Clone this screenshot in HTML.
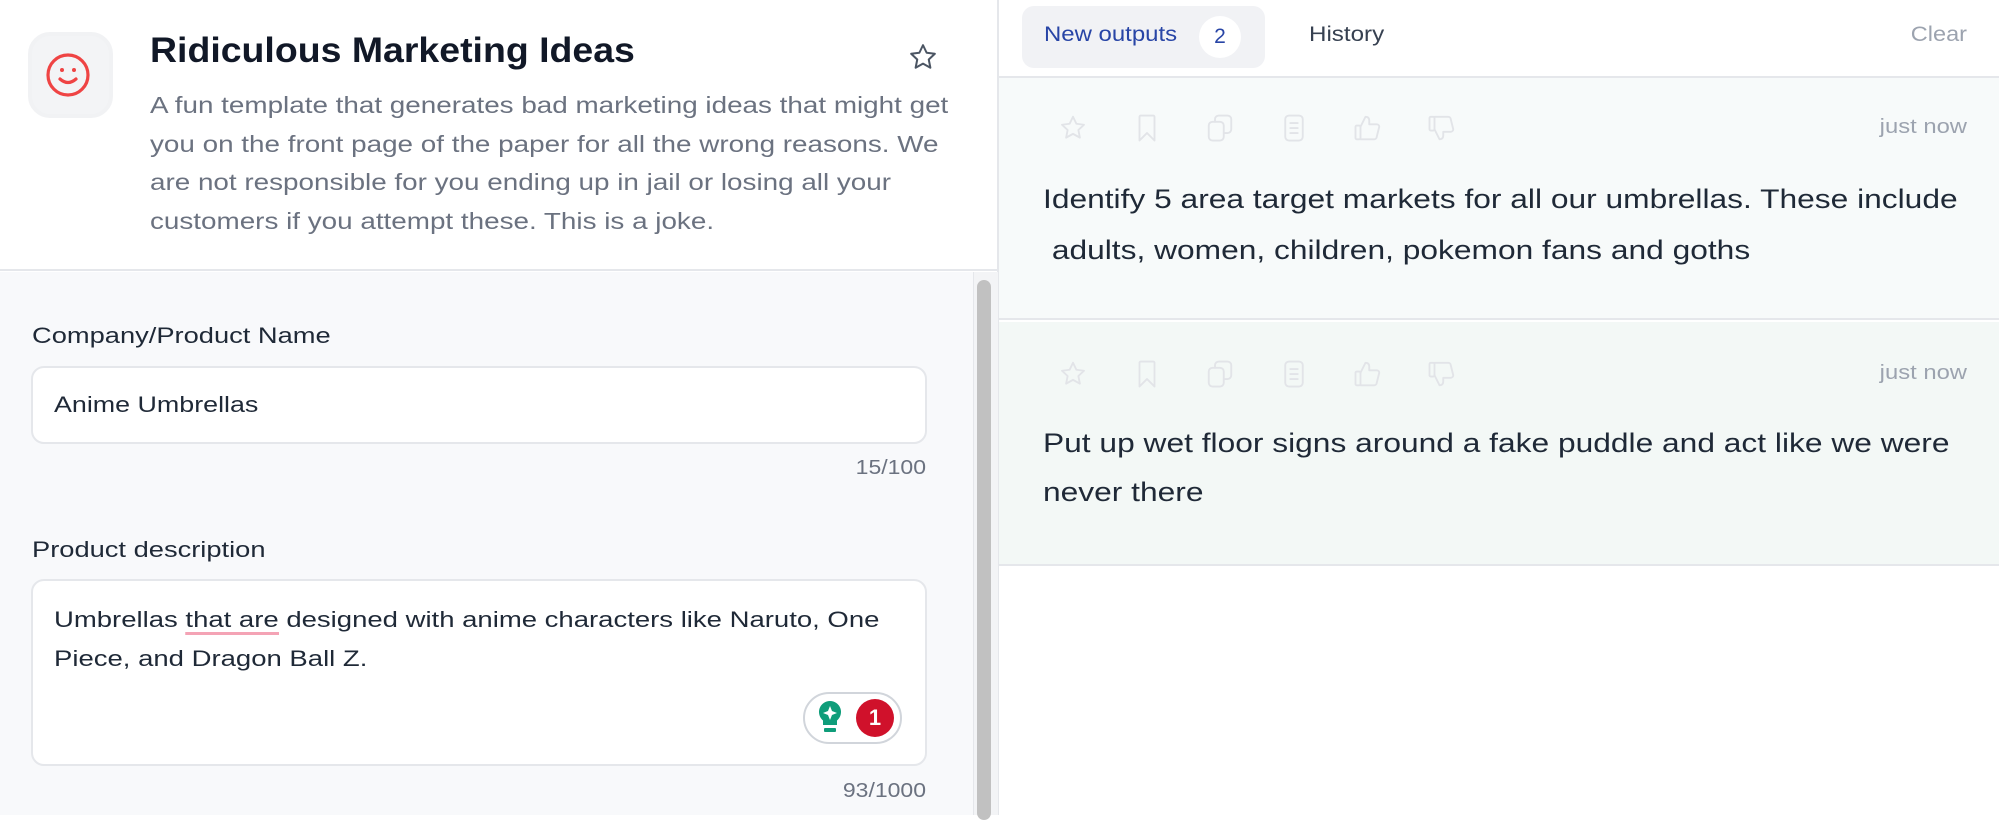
<!DOCTYPE html>
<html><head><meta charset="utf-8"><style>
*{box-sizing:border-box;margin:0;padding:0}
body{width:1999px;height:815px;overflow:hidden;background:#fff;font-family:"Liberation Sans",Arial,sans-serif;position:relative}
.abs{position:absolute;white-space:nowrap}
.sx{transform-origin:0 0}
.sr{transform-origin:100% 0}
.ic{position:absolute;top:0}
</style></head><body>
<div class="abs" style="left:0;top:0;width:998px;height:271px;background:#fff;border-bottom:2px solid #e5e7eb"></div>
<div class="abs" style="left:0;top:272px;width:998px;height:543px;background:#f8f9fb"></div>
<div class="abs" style="left:997px;top:0;width:2px;height:815px;background:#e5e7eb"></div>
<div class="abs" style="left:973px;top:272px;width:25px;height:543px;background:#f3f4f6;border-left:1px solid #e5e7eb"></div>
<div class="abs" style="left:977px;top:280px;width:14px;height:540px;background:#c1c1c1;border-radius:7px"></div>
<div class="abs" style="left:28px;top:32px;width:85px;height:86px;border:4px solid #f1f2f4;border-radius:22px;background:#f3f4f6"></div>
<svg class="abs" style="left:44px;top:51px" width="48" height="48" viewBox="0 0 48 48"><circle cx="24" cy="24" r="20" fill="none" stroke="#ef4444" stroke-width="3.2"/><circle cx="18" cy="19" r="2" fill="#ef4444"/><circle cx="30" cy="19" r="2" fill="#ef4444"/><path d="M16 28 Q24 35 32 28" fill="none" stroke="#ef4444" stroke-width="3.2" stroke-linecap="round"/></svg>
<div class="abs sx" style="left:150px;top:31px;font-size:35px;font-weight:700;color:#111827;transform:scaleX(1.07)">Ridiculous Marketing Ideas</div>
<svg class="abs" style="left:908px;top:42px" width="30" height="30" viewBox="0 0 24 24"><path d="M12 2.5l2.9 6.1 6.6.8-4.9 4.6 1.3 6.6L12 17.3l-5.9 3.3 1.3-6.6-4.9-4.6 6.6-.8z" fill="none" stroke="#4b5563" stroke-width="1.6" stroke-linejoin="round"/></svg>
<div class="abs sx" style="left:150px;top:86px;font-size:23px;line-height:38.5px;color:#6b7280;transform:scaleX(1.21)">A fun template that generates bad marketing ideas that might get<br>you on the front page of the paper for all the wrong reasons. We<br>are not responsible for you ending up in jail or losing all your<br>customers if you attempt these. This is a joke.</div>
<div class="abs sx" style="left:32px;top:323px;font-size:22px;color:#1f2937;transform:scaleX(1.24)">Company/Product Name</div>
<div class="abs" style="left:31px;top:366px;width:896px;height:78px;background:#fff;border:2px solid #e5e7eb;border-radius:13px"></div>
<div class="abs sx" style="left:54px;top:392px;font-size:22px;color:#1f2937;transform:scaleX(1.22)">Anime Umbrellas</div>
<div class="abs sr" style="left:826px;top:457px;width:100px;text-align:right;font-size:20px;color:#6b7280;transform:scaleX(1.15)">15/100</div>
<div class="abs sx" style="left:32px;top:537px;font-size:22px;color:#1f2937;transform:scaleX(1.24)">Product description</div>
<div class="abs" style="left:31px;top:579px;width:896px;height:187px;background:#fff;border:2px solid #e5e7eb;border-radius:13px"></div>
<div class="abs sx" style="left:54px;top:600px;font-size:22px;line-height:39px;color:#1f2937;transform:scaleX(1.25)">Umbrellas <span style="border-bottom:3px solid #f4a3b5">that are</span> designed with anime characters like Naruto, One<br>Piece, and Dragon Ball Z.</div>
<div class="abs" style="left:803px;top:692px;width:99px;height:52px;border:2px solid #d1d5db;border-radius:26px;background:#fff"></div>
<svg class="abs" style="left:816px;top:699px" width="28" height="36" viewBox="0 0 28 36"><path d="M14 2a11 11 0 0 0-7 19.5V26h14v-4.5A11 11 0 0 0 14 2z" fill="#0f9d7a"/><path d="M14 7 l2 5 5 2-5 2-2 5-2-5-5-2 5-2z" fill="#fff"/><rect x="8" y="29" width="12" height="4" rx="1" fill="#0f9d7a"/></svg>
<div class="abs" style="left:856px;top:699px;width:38px;height:38px;border-radius:19px;background:#d0112b;color:#fff;font-size:22px;font-weight:700;text-align:center;line-height:38px">1</div>
<div class="abs sr" style="left:826px;top:780px;width:100px;text-align:right;font-size:20px;color:#6b7280;transform:scaleX(1.15)">93/1000</div>
<div class="abs" style="left:999px;top:76px;width:1000px;height:2px;background:#e5e7eb"></div>
<div class="abs" style="left:1022px;top:6px;width:243px;height:62px;background:#f1f2f5;border-radius:12px"></div>
<div class="abs sx" style="left:1044px;top:23px;font-size:21px;color:#2845a6;transform:scaleX(1.14)">New outputs</div>
<div class="abs" style="left:1199px;top:16px;width:42px;height:42px;border-radius:21px;background:#fff;text-align:center;line-height:42px;font-size:21px;color:#2845a6">2</div>
<div class="abs sx" style="left:1309px;top:23px;font-size:21px;color:#374151;transform:scaleX(1.15)">History</div>
<div class="abs sr" style="left:1867px;top:23px;width:100px;text-align:right;font-size:21px;color:#9ca3af;transform:scaleX(1.12)">Clear</div>
<div class="abs" style="left:999px;top:78px;width:1000px;height:242px;background:#f7fafa;border-bottom:2px solid #e5e7eb"></div>
<div class="abs" style="left:999px;top:322px;width:1000px;height:244px;background:#f3f8f6;border-bottom:2px solid #e5e7eb"></div>
<div class="abs" style="left:0;top:113px;width:1999px;height:30px">
<svg class="ic" style="left:1058px" width="30" height="30" viewBox="0 0 24 24" fill="none" stroke="#e2e4e8" stroke-width="1.5" stroke-linejoin="round" stroke-linecap="round"><path d="M12 3l2.7 5.6 6.1.8-4.5 4.2 1.2 6.1L12 16.7l-5.5 3 1.2-6.1-4.5-4.2 6.1-.8z"/></svg>
<svg class="ic" style="left:1132px" width="30" height="30" viewBox="0 0 24 24" fill="none" stroke="#e2e4e8" stroke-width="1.5" stroke-linejoin="round" stroke-linecap="round"><path d="M7 2h10a1 1 0 0 1 1 1v19l-6-6-6 6V3a1 1 0 0 1 1-1z"/></svg>
<svg class="ic" style="left:1205px" width="30" height="30" viewBox="0 0 24 24" fill="none" stroke="#e2e4e8" stroke-width="1.5" stroke-linejoin="round" stroke-linecap="round"><rect x="3" y="7" width="12" height="15" rx="3"/><path d="M8 7V5a3 3 0 0 1 3-3h7a3 3 0 0 1 3 3v8a3 3 0 0 1-3 3h-3"/></svg>
<svg class="ic" style="left:1279px" width="30" height="30" viewBox="0 0 24 24" fill="none" stroke="#e2e4e8" stroke-width="1.5" stroke-linejoin="round" stroke-linecap="round"><rect x="5" y="2" width="14" height="20" rx="3"/><path d="M9 8h6M9 12h6M9 16h6"/></svg>
<svg class="ic" style="left:1353px" width="30" height="30" viewBox="0 0 24 24" fill="none" stroke="#e2e4e8" stroke-width="1.5" stroke-linejoin="round" stroke-linecap="round"><rect x="2" y="10" width="4" height="11" rx="1"/><path d="M6 11l4-8c2 0 3 1 3 3v3h6a2 2 0 0 1 2 2l-2 8a2 2 0 0 1-2 2H6"/></svg>
<svg class="ic" style="left:1427px" width="30" height="30" viewBox="0 0 24 24" fill="none" stroke="#e2e4e8" stroke-width="1.5" stroke-linejoin="round" stroke-linecap="round"><rect x="2" y="3" width="4" height="11" rx="1"/><path d="M6 13l4 8c2 0 3-1 3-3v-3h6a2 2 0 0 0 2-2l-2-8a2 2 0 0 0-2-2H6"/></svg>
</div>
<div class="abs" style="left:0;top:359px;width:1999px;height:30px">
<svg class="ic" style="left:1058px" width="30" height="30" viewBox="0 0 24 24" fill="none" stroke="#e2e4e8" stroke-width="1.5" stroke-linejoin="round" stroke-linecap="round"><path d="M12 3l2.7 5.6 6.1.8-4.5 4.2 1.2 6.1L12 16.7l-5.5 3 1.2-6.1-4.5-4.2 6.1-.8z"/></svg>
<svg class="ic" style="left:1132px" width="30" height="30" viewBox="0 0 24 24" fill="none" stroke="#e2e4e8" stroke-width="1.5" stroke-linejoin="round" stroke-linecap="round"><path d="M7 2h10a1 1 0 0 1 1 1v19l-6-6-6 6V3a1 1 0 0 1 1-1z"/></svg>
<svg class="ic" style="left:1205px" width="30" height="30" viewBox="0 0 24 24" fill="none" stroke="#e2e4e8" stroke-width="1.5" stroke-linejoin="round" stroke-linecap="round"><rect x="3" y="7" width="12" height="15" rx="3"/><path d="M8 7V5a3 3 0 0 1 3-3h7a3 3 0 0 1 3 3v8a3 3 0 0 1-3 3h-3"/></svg>
<svg class="ic" style="left:1279px" width="30" height="30" viewBox="0 0 24 24" fill="none" stroke="#e2e4e8" stroke-width="1.5" stroke-linejoin="round" stroke-linecap="round"><rect x="5" y="2" width="14" height="20" rx="3"/><path d="M9 8h6M9 12h6M9 16h6"/></svg>
<svg class="ic" style="left:1353px" width="30" height="30" viewBox="0 0 24 24" fill="none" stroke="#e2e4e8" stroke-width="1.5" stroke-linejoin="round" stroke-linecap="round"><rect x="2" y="10" width="4" height="11" rx="1"/><path d="M6 11l4-8c2 0 3 1 3 3v3h6a2 2 0 0 1 2 2l-2 8a2 2 0 0 1-2 2H6"/></svg>
<svg class="ic" style="left:1427px" width="30" height="30" viewBox="0 0 24 24" fill="none" stroke="#e2e4e8" stroke-width="1.5" stroke-linejoin="round" stroke-linecap="round"><rect x="2" y="3" width="4" height="11" rx="1"/><path d="M6 13l4 8c2 0 3-1 3-3v-3h6a2 2 0 0 0 2-2l-2-8a2 2 0 0 0-2-2H6"/></svg>
</div>
<div class="abs sr" style="left:1817px;top:116px;width:150px;text-align:right;font-size:20px;color:#9ca3af;transform:scaleX(1.19)">just now</div>
<div class="abs sr" style="left:1817px;top:362px;width:150px;text-align:right;font-size:20px;color:#9ca3af;transform:scaleX(1.19)">just now</div>
<div class="abs sx" style="left:1043px;top:174px;font-size:27px;line-height:51px;color:#1f2937;transform:scaleX(1.175)">Identify 5 area target markets for all our umbrellas. These include<br>&nbsp;adults, women, children, pokemon fans and goths</div>
<div class="abs sx" style="left:1043px;top:419px;font-size:27px;line-height:49px;color:#1f2937;transform:scaleX(1.175)">Put up wet floor signs around a fake puddle and act like we were<br>never there</div>
</body></html>
